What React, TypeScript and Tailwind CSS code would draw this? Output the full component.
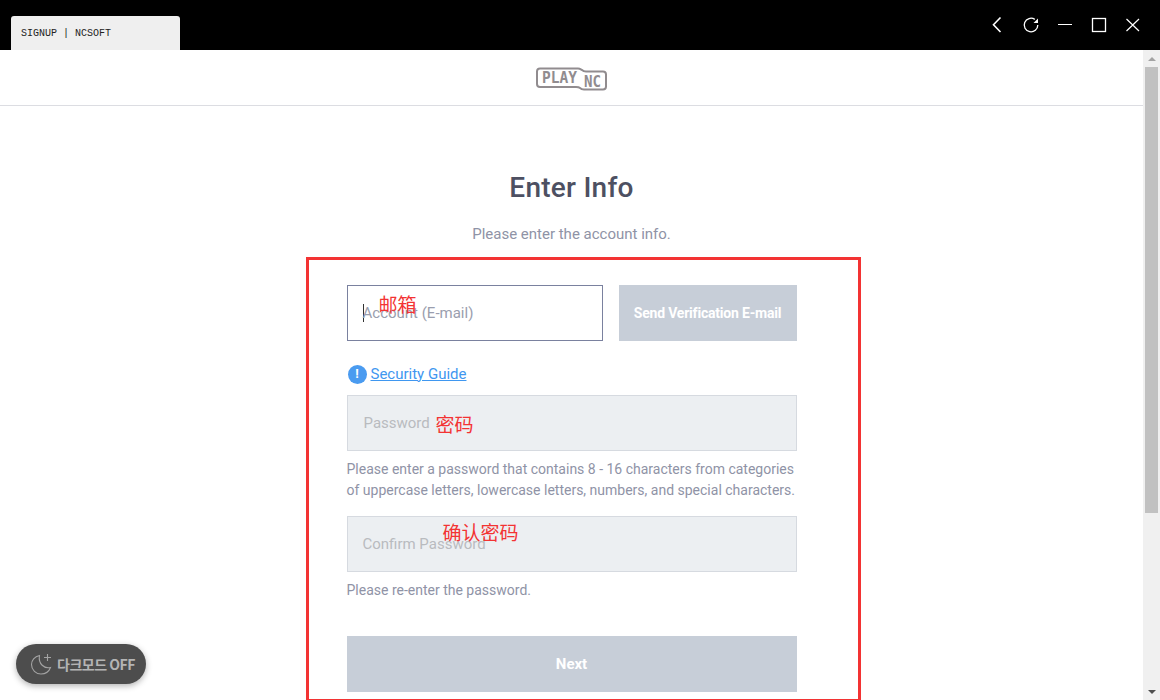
const Logo = () => (
  <svg width="72" height="27" viewBox="0 0 72 27" fill="none" className="-ml-[1px]">
    <path
      d="M5 4.500H43C45 4.500 46 5.500 47 6C48 7 49 7.500 51 7.500H68Q71 7.500 71 10.500V22.500Q71 25.500 68 25.500H49C47 25.500 46 25 45 24C44 23 43 23 41 23H5Q2 23 2 20V7.500Q2 4.500 5 4.500Z"
      stroke="#918c8f"
      strokeWidth="2"
    />
    <text x="7" y="18.800" fontFamily="'DejaVu Sans Mono', monospace" fontWeight="700" fontSize="15" textLength="35" lengthAdjust="spacingAndGlyphs" fill="#918c8f">PLAY</text>
    <text x="49" y="23" fontFamily="'DejaVu Sans Mono', monospace" fontWeight="700" fontSize="15" textLength="17" lengthAdjust="spacingAndGlyphs" fill="#918c8f">NC</text>
  </svg>
);

const MoonIcon = () => (
  <svg width="24" height="24" viewBox="0 0 24 24" fill="none" stroke="#a3a3a3" strokeWidth="1.1">
    <path d="M9.500 3.500C4.500 4.500 1.500 8.500 1.500 12.500C1.500 18 6 22 11 22C15.500 22 19 19.500 20.500 15.500C14.500 17 8 12 9.500 3.500Z" />
    <path d="M17.500 2V9M14 5.500H21" />
  </svg>
);

const WinIcon = ({ children }: { children: React.ReactNode }) => (
  <svg width="20" height="20" viewBox="0 0 20 20" fill="none" stroke="white" strokeWidth="1.3">
    {children}
  </svg>
);

const Note = ({ className, children }: { className: string; children: string }) => (
  <span className={"absolute text-[19px] leading-none text-[#f33333] font-['Noto_Sans_CJK_SC',sans-serif] " + className}>
    {children}
  </span>
);

export default function App() {
  return (
    <div className="flex h-[700px] w-[1160px] flex-col overflow-hidden bg-white font-['Roboto',sans-serif]">
      <div className="flex h-[50px] shrink-0 items-end justify-between bg-black">
        <div className="ml-[11px] flex h-[34px] w-[169px] items-center rounded-t-[3px] bg-[#efefef] pl-[10px] font-['Liberation_Mono',monospace] text-[10px] text-[#222]">
          SIGNUP | NCSOFT
        </div>
        <div className="mr-[17px] flex h-[50px] items-center gap-[14px]">
          <WinIcon><path d="M13.500 2.500L6.500 9.800L13.500 17" strokeWidth="1.6" /></WinIcon>
          <WinIcon>
            <path d="M13.800 4.400A6.800 6.800 0 1 0 16.800 10" />
            <path d="M17 3.500V8H12.500Z" fill="white" stroke="none" />
          </WinIcon>
          <WinIcon><path d="M3 9.500H17" strokeWidth="1" /></WinIcon>
          <WinIcon><rect x="3.500" y="3.500" width="13" height="13" /></WinIcon>
          <WinIcon><path d="M3.500 4L16 16M16 4L3.500 16" strokeWidth="1.200" /></WinIcon>
        </div>
      </div>

      <div className="flex min-h-0 flex-1">
        <div className="relative min-w-0 flex-1 overflow-hidden">
          <div className="flex h-[56px] items-center justify-center border-b border-[#dcdde2]">
            <Logo />
          </div>

          <h1 className="mt-[64px] text-center text-[28px] leading-[36px] font-medium tracking-[0.25px] text-[#4d5062]">Enter Info</h1>
          <p className="mt-[18px] text-center text-[15px] leading-[20px] text-[#8f93a6]">Please enter the account info.</p>

          <div className="relative mx-auto mt-[13px] w-[450px] pt-[28px]">
            <div className="flex gap-[16px]">
              <div className="flex h-[56px] w-[256px] items-center border border-[#7a819f] pl-[15px] text-[15px] text-[#9a9eae]">
                <span className="mr-[-1px] h-[18px] w-[1px] bg-[#333]" />
                Account (E-mail)
              </div>
              <button className="h-[56px] w-[178px] bg-[#c7ced8] text-[14px] font-bold tracking-[-0.2px] text-white">
                Send Verification E-mail
              </button>
            </div>

            <div className="mt-[22px] ml-[1px] flex h-[22px] items-center gap-[4px]">
              <span className="flex h-[19px] w-[19px] items-center justify-center rounded-full bg-[#4a9bf0] text-[13px] font-bold text-white">!</span>
              <a className="text-[15px] text-[#3f97f0] underline">Security Guide</a>
            </div>

            <div className="mt-[10px] flex h-[56px] items-center border border-[#d6dae0] bg-[#eceff2] pl-[16px] text-[15px] text-[#b9bbbf]">
              Password
            </div>
            <p className="mt-[8px] text-[14px] leading-[21px] text-[#8f93a6]">
              Please enter a password that contains 8 - 16 characters from categories
              <br />
              of uppercase letters, lowercase letters, numbers, and special characters.
            </p>

            <div className="mt-[15px] flex h-[56px] items-center border border-[#d6dae0] bg-[#eceff2] pl-[15px] text-[15px] text-[#b9bbbf]">
              Confirm Password
            </div>
            <p className="mt-[8px] text-[14px] leading-[21px] text-[#8f93a6]">Please re-enter the password.</p>

            <button className="mt-[35px] mb-[10px] h-[56px] w-full bg-[#c7ced8] text-[15px] font-bold text-white">Next</button>

            {/* red annotations drawn over the form */}
            <div className="absolute inset-y-0 -right-[64px] -left-[41px] border-[3px] border-[#f33333]" />
            <Note className="left-[32px] top-[37px]">邮箱</Note>
            <Note className="left-[89px] top-[157px]">密码</Note>
            <Note className="left-[96px] top-[265px]">确认密码</Note>
          </div>

          <div className="absolute top-[594px] left-[16px] flex h-[40px] w-[130px] items-center gap-[3px] rounded-full bg-[#4d4d4d] pl-[14px] font-['Noto_Sans_CJK_KR',sans-serif] text-[14px] font-bold tracking-[-0.5px] text-[#b4b4b4] shadow-[0_2px_6px_rgba(0,0,0,0.3)]">
            <MoonIcon />
            다크모드 OFF
          </div>
        </div>

        <div className="flex w-[17px] shrink-0 flex-col items-center bg-[#f0f0f0]">
          <div className="flex h-[17px] shrink-0 items-center justify-center">
            <span className="h-0 w-0 border-x-[4px] border-b-[4px] border-x-transparent border-b-[#a3a3a3]" />
          </div>
          <div className="h-[446px] w-[13px] bg-[#c1c1c1]" />
          <div className="flex-1" />
          <div className="flex h-[17px] shrink-0 items-center justify-center">
            <span className="h-0 w-0 border-x-[4px] border-t-[4px] border-x-transparent border-t-[#505050]" />
          </div>
        </div>
      </div>
    </div>
  );
}
